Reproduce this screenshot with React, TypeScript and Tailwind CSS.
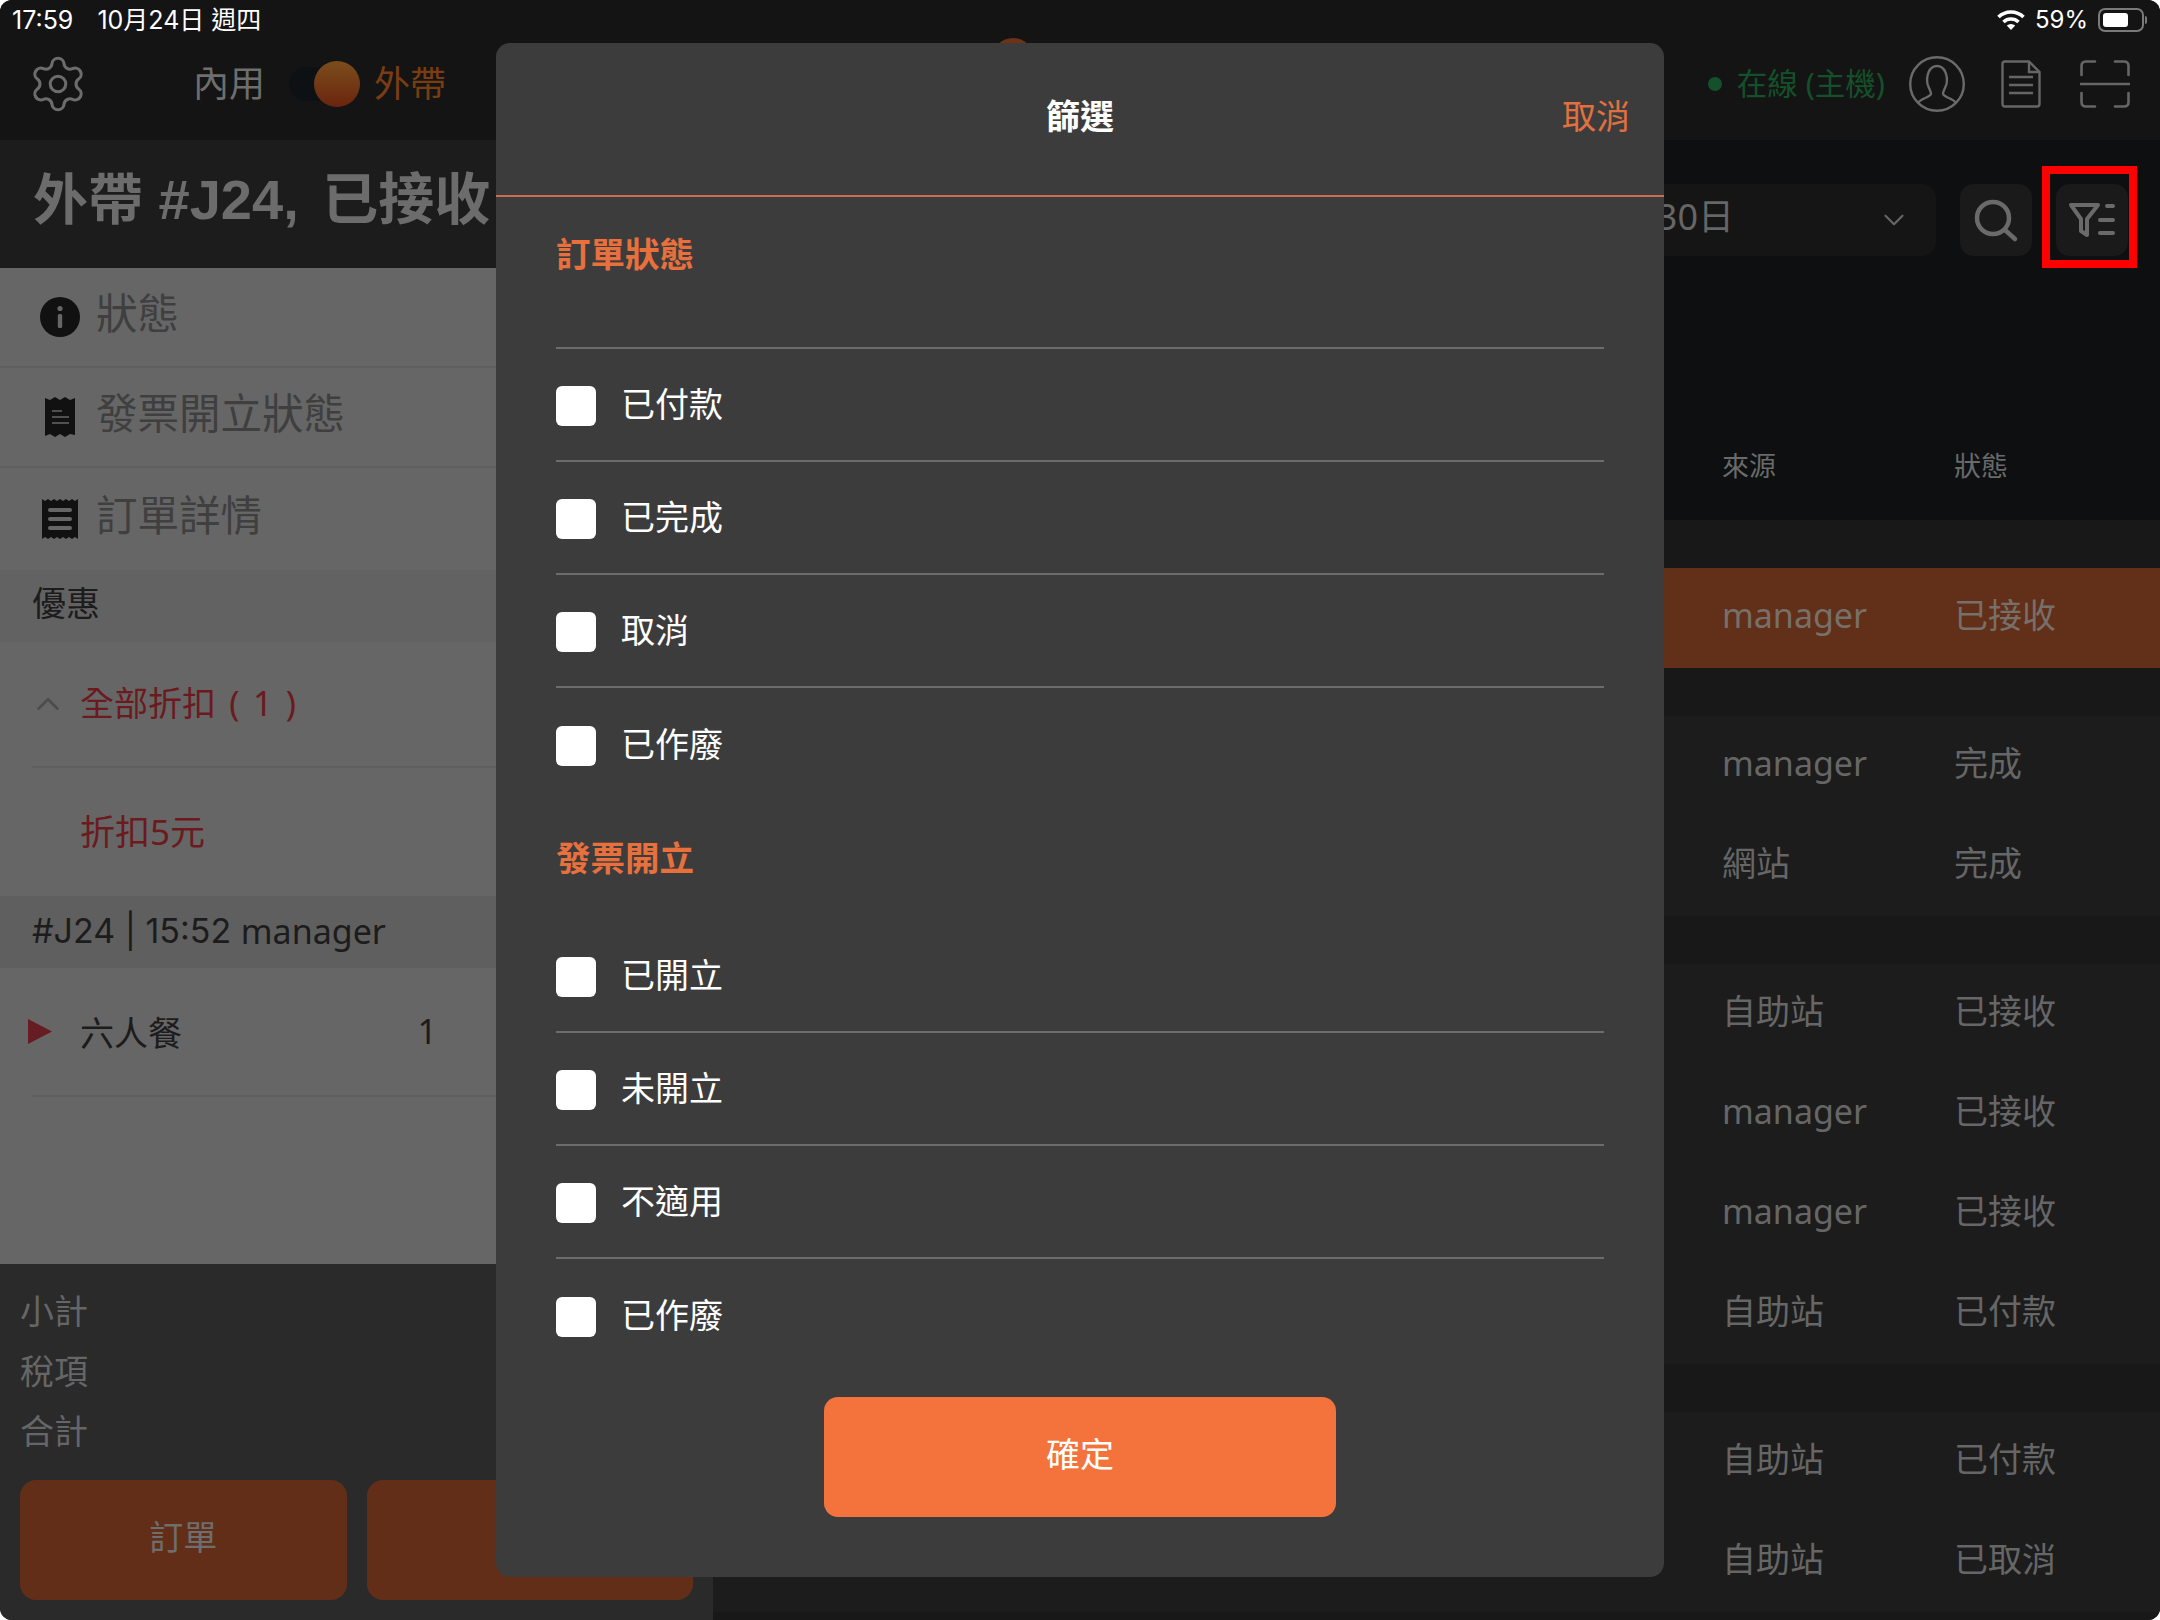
import { ChevronDown, ChevronUp, Settings } from "lucide-react";

const orderOptions = ["已付款", "已完成", "取消", "已作廢"];
const invoiceOptions = ["已開立", "未開立", "不適用", "已作廢"];

const orderGroups = [
  [{ source: "manager", status: "已接收", active: true }],
  [
    { source: "manager", status: "完成" },
    { source: "網站", status: "完成" },
  ],
  [
    { source: "自助站", status: "已接收" },
    { source: "manager", status: "已接收" },
    { source: "manager", status: "已接收" },
    { source: "自助站", status: "已付款" },
  ],
  [
    { source: "自助站", status: "已付款" },
    { source: "自助站", status: "已取消" },
  ],
];

function StatusBar() {
  return (
    <div className="h-[40px] flex items-center justify-between pl-[12px] pr-[13px] text-white font-['Inter','Noto_Sans_CJK_TC',sans-serif]">
      <div className="flex gap-[24px] text-[25px]">
        <span>17:59</span>
        <span>10月24日 週四</span>
      </div>
      <div className="flex items-center gap-[10px] text-[24px]">
        <svg width="28" height="22" viewBox="0 0 28 22" fill="none" stroke="white" strokeWidth="3.6">
          <path d="M1.5 8 A18 18 0 0 1 26.5 8" />
          <path d="M6.5 13 A11 11 0 0 1 21.5 13" />
          <path d="M14 21 L9.8 16.6 A6 6 0 0 1 18.2 16.6 Z" fill="white" stroke="none" />
        </svg>
        <span>59%</span>
        <div className="flex items-center gap-[1px]">
          <div className="w-[46px] h-[24px] rounded-[7px] border-2 border-[#7a7a7a] p-[3px]">
            <div className="w-[25px] h-full rounded-[3px] bg-white" />
          </div>
          <div className="w-[2px] h-[8px] rounded-r bg-[#7a7a7a]" />
        </div>
      </div>
    </div>
  );
}

function NavBar() {
  return (
    <div className="h-[100px] pb-[12px] flex items-center pl-[27px] pr-[30px] relative">
      <Settings size={62} strokeWidth={1.2} className="text-[#6c6c6c]" />
      <span className="ml-[104px] pb-[1px] text-[36px] text-[#6e6e6e]">內用</span>
      <div className="ml-[24px] relative w-[70px] h-[34px] rounded-full bg-[#0e1113]">
        <div className="absolute right-[-1px] top-[-6px] w-[46px] h-[46px] rounded-full bg-gradient-to-b from-[#7a4d1c] to-[#6a240e]" />
      </div>
      <span className="ml-[15px] pb-[1px] text-[36px] text-[#7a3c12]">外帶</span>
      <div className="absolute left-[992px] top-[-2px] w-[42px] h-[42px] rounded-full bg-[#6e3216]" />
      <div className="ml-auto flex items-center">
        <div className="w-[14px] h-[14px] rounded-full bg-[#14502a]" />
        <span className="ml-[15px] pb-[2px] text-[30.5px] text-[#14502a]">在線 (主機)</span>
        <svg className="ml-[24px]" width="56" height="56" viewBox="0 0 56 56" fill="none" stroke="#6a6a6a" strokeWidth="2.4">
          <circle cx="28" cy="28" r="26.8" />
          <path d="M9 47 C12 42 20 42 22 38 C22.5 36 20 33 18.5 28 C17 20 20 10 28 10 C36 10 39 20 37.5 28 C36 33 33.5 36 34 38 C36 42 44 42 47 47" />
        </svg>
        <svg className="ml-[36px]" width="40" height="48" viewBox="0 0 40 48" fill="none" stroke="#666666" strokeWidth="2.4">
          <path d="M3 1.5 H28 L38.5 12 V44 Q38.5 46.5 36 46.5 H4 Q1.5 46.5 1.5 44 V4 Q1.5 1.5 4 1.5 Z" />
          <path d="M28 1.5 V12 H38.5" />
          <path d="M8 17 H32 M8 25 H32 M8 33 H32" />
        </svg>
        <svg className="ml-[39px]" width="50" height="48" viewBox="0 0 50 48" fill="none" stroke="#666666" strokeWidth="2.6" strokeLinecap="round">
          <path d="M1.5 15 V6 Q1.5 1.5 6 1.5 H15 M35 1.5 H44 Q48.5 1.5 48.5 6 V15" />
          <path d="M1 24 H49" />
          <path d="M1.5 33 V42 Q1.5 46.5 6 46.5 H15 M35 46.5 H44 Q48.5 46.5 48.5 42 V33" />
        </svg>
      </div>
    </div>
  );
}

function InfoIcon() {
  return (
    <svg width="40" height="40" viewBox="0 0 40 40">
      <circle cx="20" cy="20" r="20" fill="#111111" />
      <circle cx="20" cy="11.5" r="2.6" fill="#666666" />
      <rect x="17.8" y="17" width="4.4" height="14" rx="1.5" fill="#666666" />
    </svg>
  );
}

function ReceiptIcon() {
  return (
    <svg width="30" height="40" viewBox="0 0 30 40">
      <path
        d="M0 1 L5 3 L10 0 L15 3 L20 0 L25 3 L30 1 V38 L25 37 L20 40 L15 37 L10 40 L5 37 L0 39 Z"
        fill="#111111"
      />
      <path d="M7 14 H17 M7 20 H24 M7 26 H24" stroke="#666666" strokeWidth="1.6" />
    </svg>
  );
}

function TicketIcon() {
  return (
    <svg width="36" height="40" viewBox="0 0 36 40">
      <path
        d="M0 0 L3 2 L6 0 L9 2 L12 0 L15 2 L18 0 L21 2 L24 0 L27 2 L30 0 L33 2 L36 0 V40 L33 38 L30 40 L27 38 L24 40 L21 38 L18 40 L15 38 L12 40 L9 38 L6 40 L3 38 L0 40 Z"
        fill="#111111"
      />
      <path d="M8 11 H28 M8 20 H28 M8 29 H28" stroke="#666666" strokeWidth="4" strokeLinecap="round" />
    </svg>
  );
}

function LeftPanel() {
  return (
    <div className="w-[713px] shrink-0 flex flex-col">
      <div className="h-[128px] bg-[#1c1c1c] flex items-center pl-[33px] pb-[12px]">
        <span className="text-[55px] font-bold text-[#6c6c6c] whitespace-pre">
          外帶<span className="font-['Liberation_Sans',sans-serif] text-[56px]"> #J24, </span>
          <span className="ml-[8px] text-[56px]">已接收</span>
        </span>
      </div>
      <div className="flex-1 bg-[#666666] flex flex-col">
        <div className="h-[100px] flex items-center pl-[40px] gap-[16px] border-b-2 border-[#5f5f5f] text-[41.5px] text-[#3f3f3f]">
          <InfoIcon />
          <span className="pb-[6px]">狀態</span>
        </div>
        <div className="h-[100px] flex items-center pl-[45px] gap-[21px] border-b-2 border-[#5f5f5f] text-[41.5px] text-[#3f3f3f]">
          <ReceiptIcon />
          <span className="pb-[6px]">發票開立狀態</span>
        </div>
        <div className="h-[102px] flex items-center pl-[42px] gap-[18px] text-[41.5px] text-[#3f3f3f]">
          <TicketIcon />
          <span className="pb-[6px]">訂單詳情</span>
        </div>
        <div className="h-[72px] bg-[#626262] flex items-center pl-[32px] pb-[6px] text-[34px] text-[#1c1c1c]">優惠</div>
        <div className="ml-[32px] h-[126px] flex items-center border-b-2 border-[#5f5f5f]">
          <ChevronUp size={38} strokeWidth={1.6} className="ml-[-3px] text-[#4c4c4c]" />
          <span className="ml-[13px] pb-[2px] text-[34px] text-[#6b1a1e] [word-spacing:4.5px]">全部折扣 ( 1 )</span>
        </div>
        <div className="h-[128px] flex items-center pl-[80px] pb-[2px] text-[35px] text-[#6b1a1e]">折扣5元</div>
        <div className="h-[72px] bg-[#5f5f5f] flex items-center pl-[32px] pb-[3px] text-[34px] text-[#1c1c1c] whitespace-pre">
          <span className="font-['Inter',sans-serif]">#J24 | 15:52 </span>
          <span>manager</span>
        </div>
        <div className="ml-[32px] h-[129px] flex items-center border-b-2 border-[#5f5f5f] text-[34px] text-[#1c1c1c]">
          <svg className="ml-[-4px]" width="24" height="25" viewBox="0 0 24 25">
            <path d="M0 0 L24 12.5 L0 25 Z" fill="#661c22" />
          </svg>
          <span className="ml-[28px] pt-[2px]">六人餐</span>
          <span className="ml-auto mr-[276px] pb-[2px]">1</span>
        </div>
      </div>
      <div className="h-[356px] bg-[#2a2a2a] flex flex-col px-[20px]">
        <div className="flex flex-col gap-[26px] pt-[30px] text-[34px] text-[#666666]">
          <span>小計</span>
          <span>稅項</span>
          <span>合計</span>
        </div>
        <div className="mt-auto mb-[20px] flex gap-[20px]">
          <div className="flex-1 h-[120px] rounded-[16px] bg-[#632e18] flex items-center justify-center pb-[6px] text-[34px] text-[#6e6e6e]">
            訂單
          </div>
          <div className="flex-1 h-[120px] rounded-[16px] bg-[#632e18]" />
        </div>
      </div>
    </div>
  );
}

function RightPanel() {
  return (
    <div className="flex-1 min-w-0 flex flex-col bg-[#181818]">
      <div className="h-[380px] bg-[#0d0f11] flex flex-col">
        <div className="relative mt-[44px] flex justify-end gap-[24px] pr-[32px]">
          <div className="w-[600px] h-[72px] rounded-[14px] bg-[#151515] flex items-center justify-end pr-[25px] text-[#666666]">
            <span className="text-[36px] mr-[143px] pb-[6px]">30日</span>
            <ChevronDown size={34} strokeWidth={1.5} />
          </div>
          <div className="w-[72px] h-[72px] rounded-[14px] bg-[#1a1a1a]">
            <svg width="72" height="72" viewBox="0 0 72 72" fill="none" stroke="#6a6a6a" strokeWidth="4.5" strokeLinecap="round">
              <circle cx="33" cy="34" r="16" />
              <path d="M45 46 L55 55" />
            </svg>
          </div>
          <div className="w-[72px] h-[72px] rounded-[14px] bg-[#1a1a1a]">
            <svg width="72" height="72" viewBox="0 0 72 72" fill="none" stroke="#6a6a6a" strokeWidth="4" strokeLinecap="round" strokeLinejoin="round">
              <path d="M15 21 H42 L31 35 V51 L25 47 V35 Z" />
              <path d="M51 22 H57 M44 36 H57 M44 49 H57" />
            </svg>
          </div>
          <div className="absolute right-[23px] top-[-18px] w-[95px] h-[102px] border-[8px] border-[#ff0000]" />
        </div>
        <div className="mt-[196px] flex pl-[1009px] text-[27px] text-[#6a6a6a]">
          <span className="w-[232px]">來源</span>
          <span>狀態</span>
        </div>
      </div>
      {orderGroups.map((group, i) => (
        <div key={i} className="pt-[48px]">
          {group.map((row, j) => (
            <div
              key={j}
              className={
                row.active
                  ? "h-[100px] flex items-center pl-[1009px] pb-[6px] text-[34px] text-[#77706a] bg-[#622f18]"
                  : "h-[100px] flex items-center pl-[1009px] pb-[6px] text-[34px] text-[#666666] bg-[#1c1c1c]"
              }
            >
              <span className="w-[232px]">{row.source}</span>
              <span>{row.status}</span>
            </div>
          ))}
        </div>
      ))}
    </div>
  );
}

function OptionRow({ label, last }: { label: string; last: boolean }) {
  return (
    <div
      className={
        last
          ? "h-[113px] flex items-center gap-[25px]"
          : "h-[113px] flex items-center gap-[25px] border-b-2 border-[#6c6c6c]"
      }
    >
      <div className="mt-[2px] w-[40px] h-[40px] rounded-[6px] bg-white" />
      <span className="pb-[2px] text-[34px] text-white">{label}</span>
    </div>
  );
}

function FilterModal() {
  return (
    <div className="absolute left-[496px] top-[43px] w-[1168px] h-[1534px] rounded-[14px] bg-[#3c3c3c] flex flex-col">
      <div className="h-[154px] shrink-0 grid grid-cols-[1fr_auto_1fr] items-center px-[34px] pb-[6px] border-b-2 border-[#c9714d]">
        <span />
        <span className="text-[34px] font-bold text-white">篩選</span>
        <span className="justify-self-end text-[34px] text-[#e0703f]">取消</span>
      </div>
      <div className="px-[60px]">
        <div className="h-[152px] pt-[40px] border-b-2 border-[#6c6c6c]">
          <span className="text-[34.5px] font-bold text-[#e8703c]">訂單狀態</span>
        </div>
        {orderOptions.map((label, i) => (
          <OptionRow key={label} label={label} last={i === orderOptions.length - 1} />
        ))}
        <div className="h-[119px] flex items-center pb-[4px]">
          <span className="text-[34.5px] font-bold text-[#e8703c]">發票開立</span>
        </div>
        {invoiceOptions.map((label, i) => (
          <OptionRow key={label} label={label} last={i === invoiceOptions.length - 1} />
        ))}
      </div>
      <div className="mt-auto mb-[60px] self-center w-[512px] h-[120px] rounded-[14px] bg-[#f4733c] flex items-center justify-center pb-[6px] text-[34px] text-white">
        確定
      </div>
    </div>
  );
}

export default function App() {
  return (
    <div className="relative w-[2160px] h-[1620px] rounded-[12px] overflow-hidden bg-[#181818] flex flex-col leading-none font-['Noto_Sans','Noto_Sans_CJK_TC',sans-serif]">
      <div className="bg-[#141414]">
        <StatusBar />
        <NavBar />
      </div>
      <div className="flex-1 min-h-0 flex">
        <LeftPanel />
        <RightPanel />
      </div>
      <FilterModal />
    </div>
  );
}
